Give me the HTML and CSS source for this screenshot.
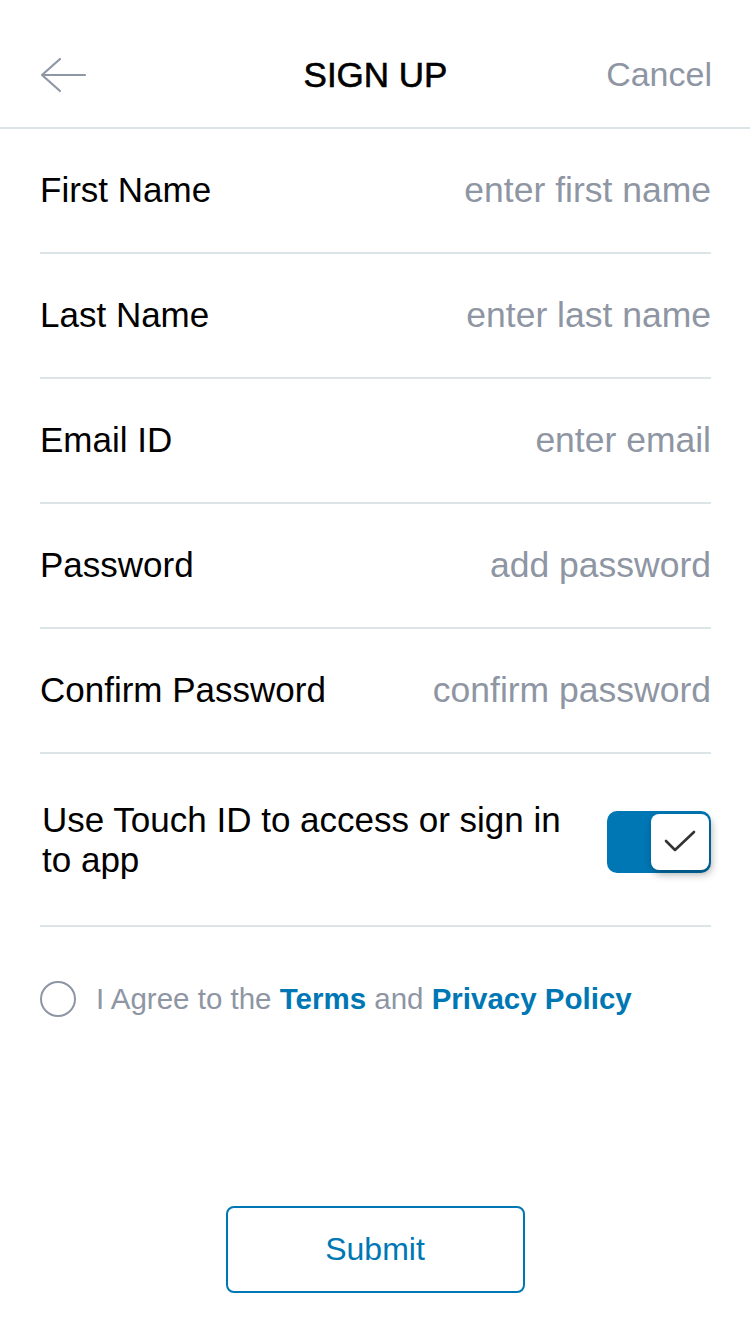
FILE: index.html
```html
<!DOCTYPE html>
<html>
<head>
<meta charset="utf-8">
<link rel="stylesheet" href="styles.css">
</head>
<body>
<div class="screen">
  <header class="topbar">
    <svg class="back" width="48" height="36" viewBox="0 0 48 36"><path d="M46 18H3M21 2L3 18L21 34" fill="none" stroke="#8e97a6" stroke-width="2.2" stroke-linecap="round" stroke-linejoin="round"/></svg>
    <h1 class="title">SIGN UP</h1>
    <span class="cancel">Cancel</span>
  </header>
  <div class="form">
    <div class="row"><span class="label">First Name</span><span class="ph">enter first name</span></div>
    <div class="row"><span class="label">Last Name</span><span class="ph">enter last name</span></div>
    <div class="row"><span class="label">Email ID</span><span class="ph">enter email</span></div>
    <div class="row"><span class="label">Password</span><span class="ph">add password</span></div>
    <div class="row"><span class="label">Confirm Password</span><span class="ph">confirm password</span></div>
    <div class="row touch">
      <span class="touch-text">Use Touch ID to access or sign in to app</span>
      <div class="toggle">
        <div class="knob">
          <svg width="34" height="26" viewBox="0 0 34 26"><path d="M3 12L12 21L31 3" fill="none" stroke="#333" stroke-width="2.6" stroke-linecap="round" stroke-linejoin="round"/></svg>
        </div>
      </div>
    </div>
  </div>
  <div class="agree">
    <span class="radio"></span>
    <span class="agree-text">I Agree to the <b>Terms</b> and <b>Privacy Policy</b></span>
  </div>
  <div class="actions">
    <button class="submit">Submit</button>
  </div>
</div>
</body>
</html>
```
FILE: styles.css
```css
* { box-sizing: border-box; }
html, body { margin: 0; padding: 0; background: #fff; }
body { font-family: "Liberation Sans", Arial, Helvetica, sans-serif; width: 750px; height: 1334px; overflow: hidden; }
.screen { display: flex; flex-direction: column; }
.topbar {
  height: 129px;
  padding: 22px 38px 0 39px;
  display: grid;
  grid-template-columns: 1fr auto 1fr;
  align-items: center;
  border-bottom: 2px solid #dce4e7;
}
.back { display: block; justify-self: start; }
.title { margin: 0; font-size: 35px; font-weight: 400; color: #000; -webkit-text-stroke: 0.6px #000; }
.cancel { justify-self: end; font-size: 34px; color: #8e95a3; }
.form { padding: 0 39px 0 40px; }
.row {
  height: 125px;
  display: flex;
  align-items: center;
  justify-content: space-between;
  border-bottom: 2px solid #dce4e7;
  padding-bottom: 1px;
}
.label { font-size: 35px; color: #000; }
.ph { font-size: 35.5px; color: #8e95a3; }
.row.touch { height: 173px; padding-bottom: 0; }
.touch-text { font-size: 35px; line-height: 40px; color: #000; width: 545px; padding-left: 2px; }
.toggle {
  width: 104px; height: 62px; border-radius: 10px; background: #0077b5;
  display: flex; align-items: center; justify-content: flex-end; padding-right: 2px;
  margin-top: 4px;
}
.knob {
  width: 58px; height: 56px; border-radius: 8px; background: #fff;
  display: flex; align-items: center; justify-content: center;
  box-shadow: 2px 4px 8px rgba(0,0,0,0.35);
}
.agree { display: flex; align-items: center; padding: 28px 40px 0 40px; height: 115px; }
.radio { width: 36px; height: 36px; border: 2px solid #8e95a3; border-radius: 50%; margin-right: 20px; flex: none; }
.agree-text { font-size: 29.5px; color: #8e95a3; }
.agree-text b { color: #0077b5; font-weight: 700; }
.actions { display: flex; justify-content: center; padding-top: 164px; }
.submit {
  width: 299px; height: 87px; border: 2px solid #0077b5; border-radius: 8px; background: #fff;
  color: #0077b5; font-family: inherit; font-size: 32px;
}
```
